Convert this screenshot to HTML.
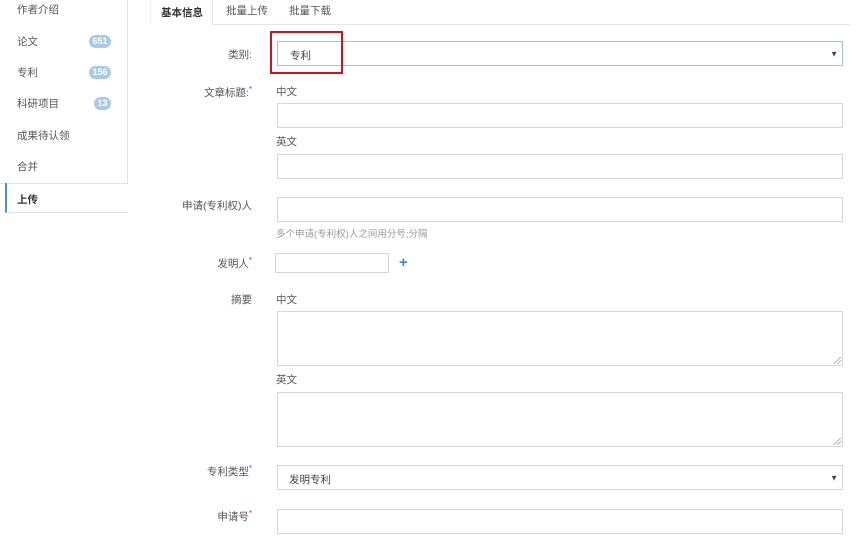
<!DOCTYPE html>
<html><head><meta charset="utf-8"><style>
*{margin:0;padding:0;box-sizing:border-box}
body{width:864px;height:547px;background:#fff;position:relative;overflow:hidden;font-family:"Liberation Sans","Noto Sans CJK SC",sans-serif;font-size:10.5px;color:#555}
.a{position:absolute;white-space:nowrap}
.side{position:absolute;left:0;top:0;width:128px;height:184px;border-right:1px solid #e3e3e3;border-bottom:1px solid #e3e3e3}
.badge{position:absolute;height:13px;border-radius:7px;background:#a9c9e8;color:#fff;font-size:9px;line-height:13px;text-align:center;font-weight:bold}
.in{position:absolute;border:1px solid #d6d6d6;background:#fff}
.lbl{position:absolute;right:612px;white-space:nowrap;color:#555}
.star{color:#d33;font-size:8px;vertical-align:top}
.arr{position:absolute;right:4px;top:50%;transform:translateY(-50%);font-size:8px;color:#444}
.grip{position:absolute;right:1px;bottom:1px;width:7px;height:7px;background:linear-gradient(135deg,transparent 45%,#999 46%,#999 52%,transparent 53%,transparent 70%,#999 71%,#999 77%,transparent 78%)}
</style></head><body>
<div class="side"></div>
<div class="a" style="left:17px;top:2px">作者介绍</div>
<div class="a" style="left:17px;top:34px">论文</div><div class="badge" style="left:89px;top:35px;width:22px">651</div>
<div class="a" style="left:17px;top:65px">专利</div><div class="badge" style="left:89px;top:66px;width:22px">156</div>
<div class="a" style="left:17px;top:96px">科研项目</div><div class="badge" style="left:94px;top:97px;width:17px">13</div>
<div class="a" style="left:17px;top:128px">成果待认领</div>
<div class="a" style="left:17px;top:159px">合并</div>
<div class="a" style="left:5px;top:183px;width:123px;height:30px;border-left:2px solid #4a90d9;border-bottom:1px solid #e3e3e3"></div>
<div class="a" style="left:17px;top:192px;font-weight:bold;color:#333">上传</div>

<div class="a" style="left:150px;top:24px;width:700px;height:1px;background:#e6e6e6"></div>
<div class="a" style="left:150px;top:0;width:63px;height:25px;background:#fff;border-right:1px solid #e6e6e6;border-left:1px solid #f0f0f0"></div>
<div class="a" style="left:161px;top:5px;font-weight:bold;color:#333">基本信息</div>
<div class="a" style="left:226px;top:3px">批量上传</div>
<div class="a" style="left:289px;top:3px">批量下载</div>

<div class="lbl" style="top:47px">类别:</div>
<div class="in" style="left:277px;top:41px;width:566px;height:25px;border-color:#9cc6ec"><span class="a" style="left:12px;top:6px;color:#444">专利</span><span class="arr">▼</span></div>
<div class="a" style="left:270px;top:31px;width:73px;height:43px;border:2px solid #c8161d"></div>

<div class="lbl" style="top:85px">文章标题:<span class="star">*</span></div>
<div class="a" style="left:276px;top:84px">中文</div>
<div class="in" style="left:277px;top:103px;width:566px;height:25px"></div>
<div class="a" style="left:276px;top:134px">英文</div>
<div class="in" style="left:277px;top:154px;width:566px;height:25px"></div>

<div class="lbl" style="top:198px">申请(专利权)人</div>
<div class="in" style="left:277px;top:197px;width:566px;height:25px"></div>
<div class="a" style="left:276px;top:226px;color:#999;font-size:9.5px">多个申请(专利权)人之间用分号;分隔</div>

<div class="lbl" style="top:256px">发明人<span class="star">*</span></div>
<div class="in" style="left:275px;top:253px;width:114px;height:20px"></div>
<div class="a" style="left:399px;top:254px;color:#3a86cf;font-size:15px;font-weight:bold">+</div>

<div class="lbl" style="top:292px">摘要</div>
<div class="a" style="left:276px;top:292px">中文</div>
<div class="in" style="left:277px;top:311px;width:566px;height:55px"><div class="grip"></div></div>
<div class="a" style="left:276px;top:372px">英文</div>
<div class="in" style="left:277px;top:392px;width:566px;height:55px"><div class="grip"></div></div>

<div class="lbl" style="top:464px">专利类型<span class="star">*</span></div>
<div class="in" style="left:277px;top:465px;width:566px;height:25px"><span class="a" style="left:11px;top:6px;color:#444">发明专利</span><span class="arr">▼</span></div>

<div class="lbl" style="top:509px">申请号<span class="star">*</span></div>
<div class="in" style="left:277px;top:509px;width:566px;height:25px"></div>
</body></html>
